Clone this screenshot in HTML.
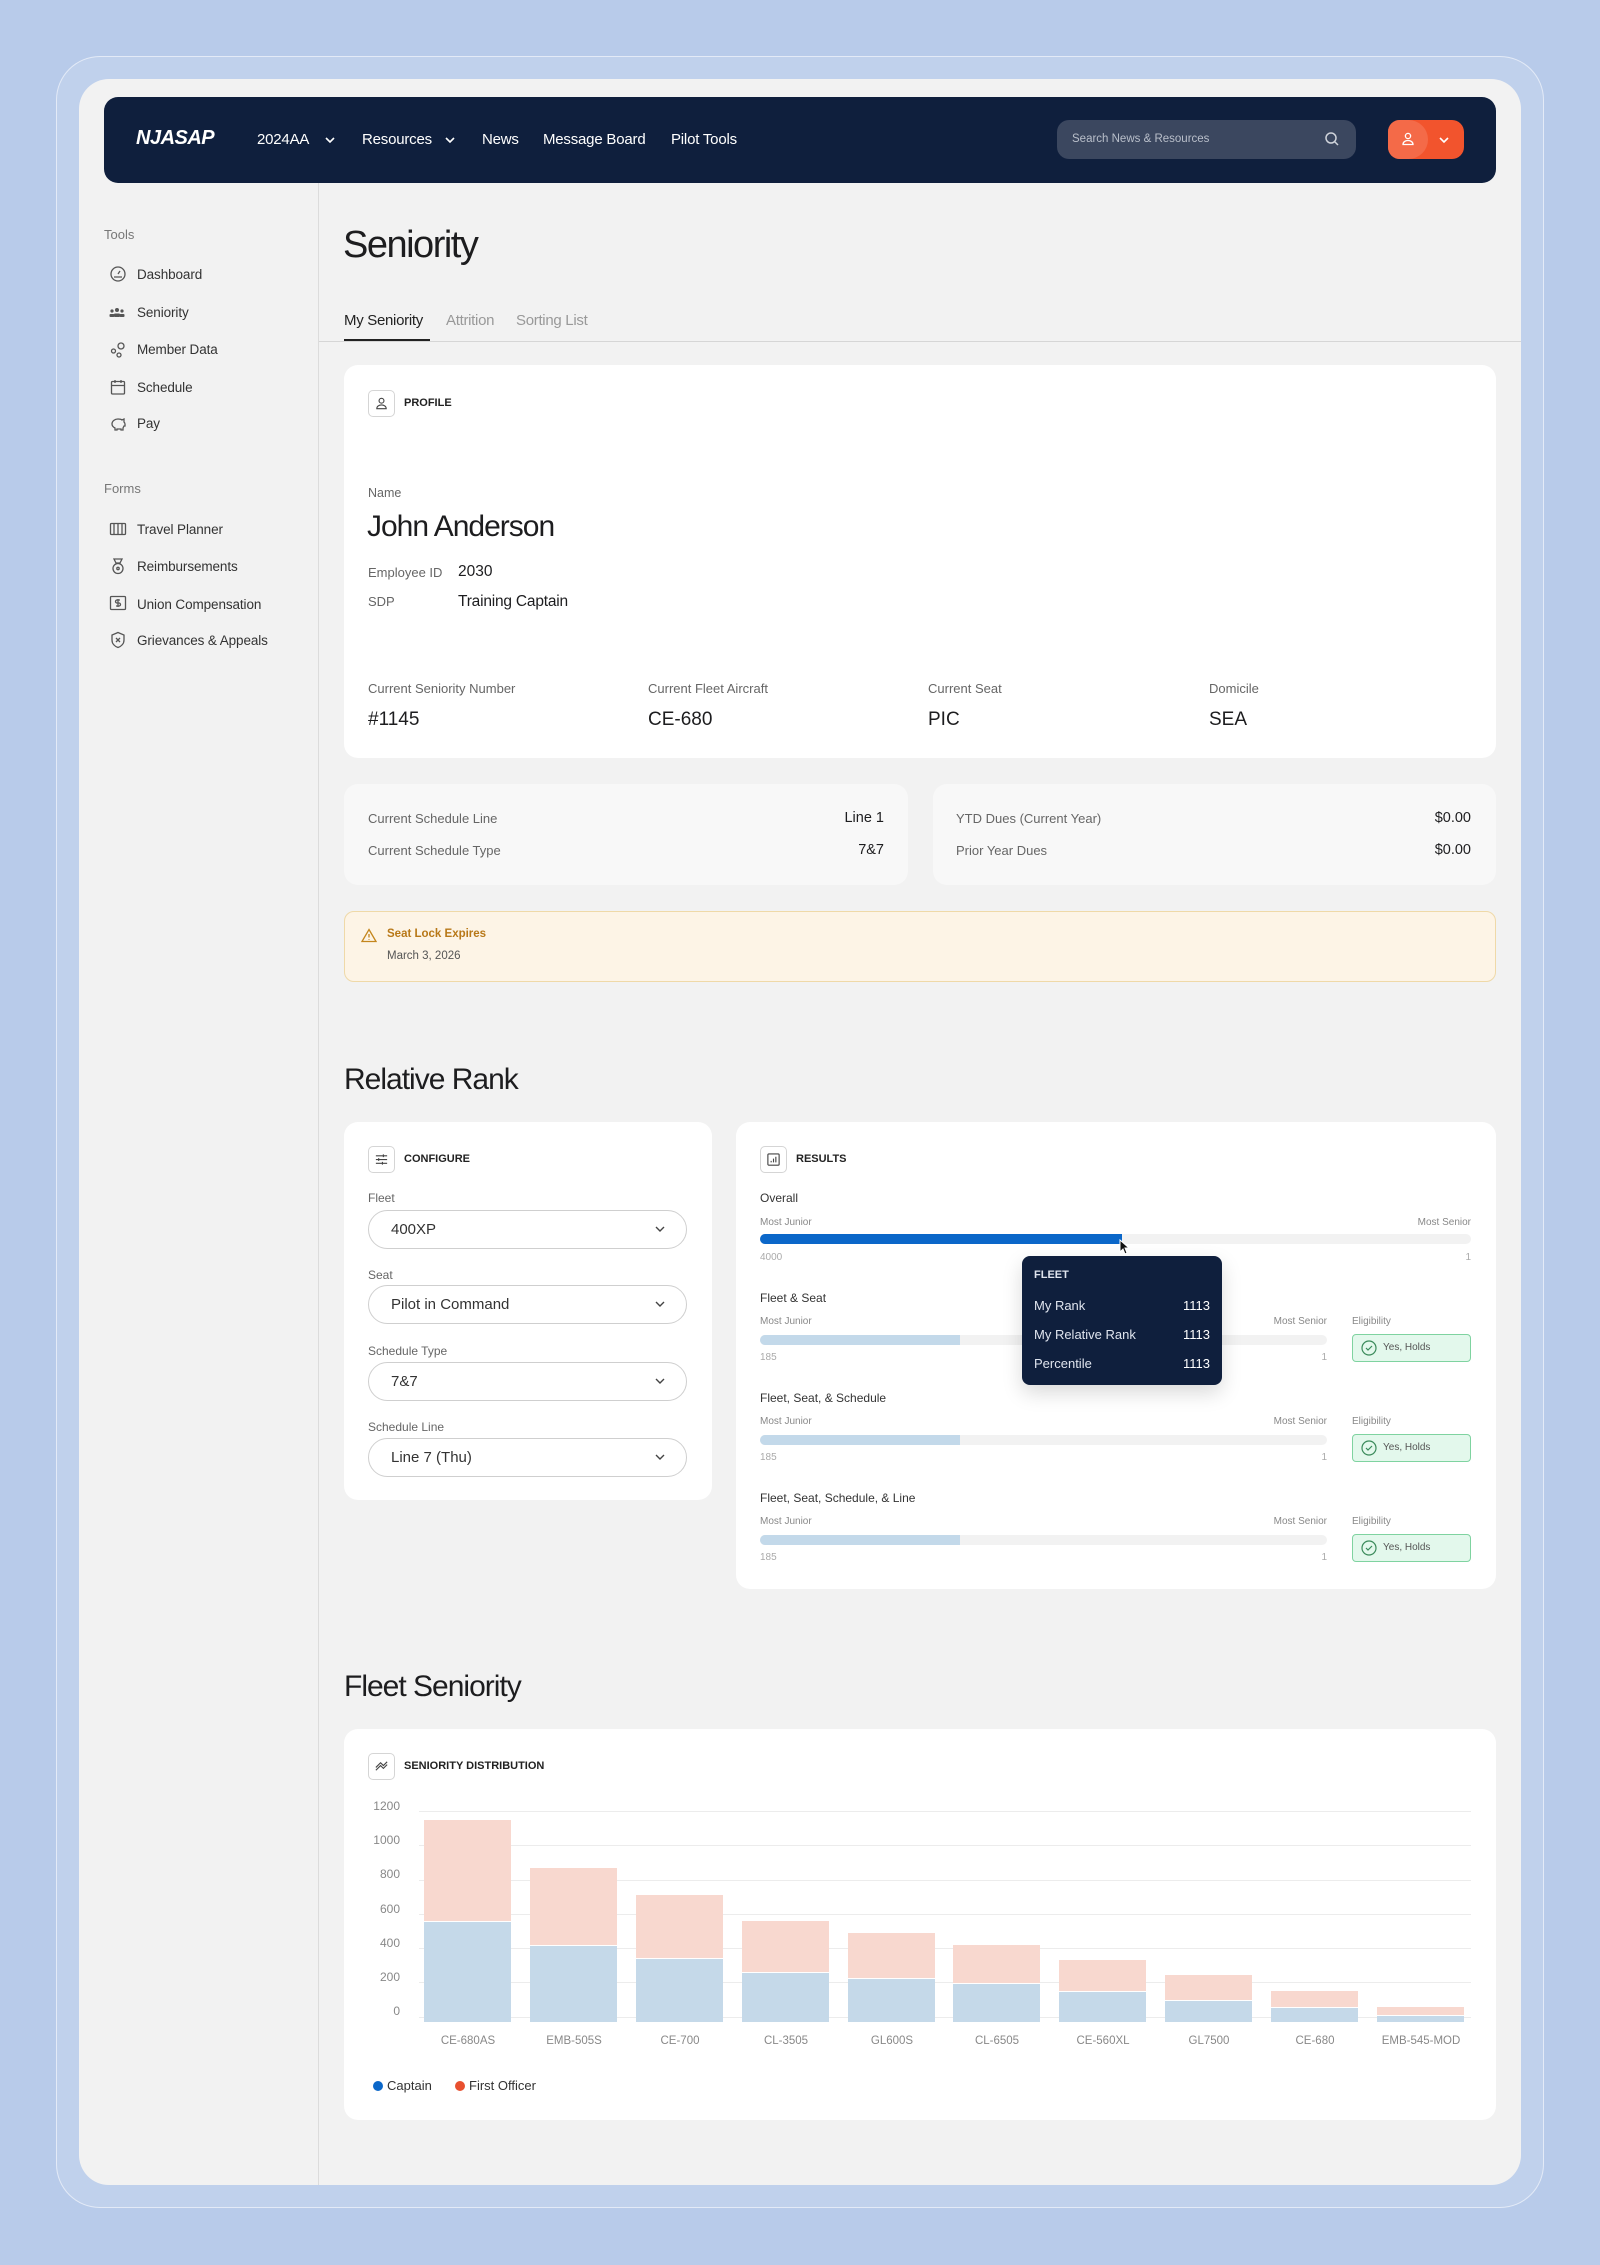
<!DOCTYPE html>
<html><head><meta charset="utf-8"><style>
*{box-sizing:border-box;margin:0;padding:0}
body{width:1600px;height:2265px;background:#b8cbea;font-family:"Liberation Sans",sans-serif;color:#1d1d1f;position:relative;overflow:hidden}
.a{position:absolute}
.frame{left:56px;top:56px;width:1488px;height:2152px;border-radius:44px;background:rgba(255,255,255,.12);border:1.5px solid rgba(255,255,255,.55)}
.card0{left:79px;top:79px;width:1442px;height:2106px;border-radius:30px;background:#f2f2f2}
.nav{left:104px;top:97px;width:1392px;height:86px;border-radius:14px;background:#0f1f3d}
.nv{color:#fff;font-size:15px;top:131px;letter-spacing:-.2px}
.side{left:318px;top:183px;width:1px;height:2002px;background:#dcdcdc}
.sl{font-size:13px;color:#777}
.si{font-size:13.5px;color:#333;letter-spacing:-.1px}
.ic{width:18px;height:18px}
.wc{background:#fff;border-radius:14px}
.lab{font-size:12px;color:#666}
.ib{width:27px;height:27px;border:1px solid #d5d5d5;border-radius:5px;background:#fff}
.ht{font-size:11px;font-weight:bold;color:#222}
.sel{border:1px solid #cfcfcf;border-radius:20px;height:39px;width:319px;background:#fff;font-size:15px;color:#333;padding:0 0 0 22px;line-height:37px}
.sel svg{position:absolute;right:20px;top:14px}
.small{font-size:10px;color:#888}
.bar{height:10px;border-radius:5px;background:#f2f2f2}
.badge{width:119px;height:28px;border:1px solid #7fd3a0;background:#e3f8ec;border-radius:4px;font-size:10px;color:#555;padding-left:30px;line-height:26px}
.badge svg{position:absolute;left:8px;top:5px}
.h2{font-size:30px;color:#1d1d1f;letter-spacing:-1px}
.yl{font-size:12px;color:#888;width:40px;text-align:right;left:360px}
.gl{left:419px;width:1052px;height:1px;background:#ececec}
.xl{font-size:11.5px;color:#888;text-align:center;width:110px}
</style></head><body>
<div class="a frame"></div>
<div class="a card0"></div>
<div class="a nav"></div>
<div class="a" style="left:136px;top:127px;color:#fff;font-weight:bold;font-style:italic;font-size:20px;letter-spacing:-.5px">NJASAP</div>
<div class="a nv" style="left:257px;top:131px">2024AA</div>
<svg class="a" style="left:324px;top:136px" width="12" height="8" viewBox="0 0 12 8"><path d="M2 2l4 4 4-4" stroke="#fff" stroke-width="1.6" fill="none"/></svg>
<div class="a nv" style="left:362px;top:131px">Resources</div>
<svg class="a" style="left:444px;top:136px" width="12" height="8" viewBox="0 0 12 8"><path d="M2 2l4 4 4-4" stroke="#fff" stroke-width="1.6" fill="none"/></svg>
<div class="a nv" style="left:482px;top:131px">News</div>
<div class="a nv" style="left:543px;top:131px">Message Board</div>
<div class="a nv" style="left:671px;top:131px">Pilot Tools</div>
<div class="a" style="left:1057px;top:120px;width:299px;height:39px;border-radius:12px;background:#3b475f"></div>
<div class="a" style="left:1072px;top:133px;font-size:11.5px;color:#b9bfca">Search News &amp; Resources</div>
<svg class="a" style="left:1324px;top:131px" width="16" height="16" viewBox="0 0 16 16"><circle cx="7" cy="7" r="5" stroke="#cfd3da" stroke-width="1.5" fill="none"/><path d="M11 11l3 3" stroke="#cfd3da" stroke-width="1.5"/></svg>
<div class="a" style="left:1388px;top:120px;width:76px;height:39px;border-radius:12px;background:#f2542d"></div>
<div class="a" style="left:1388px;top:120px;width:40px;height:39px;border-radius:12px 20px 20px 12px;background:#f46a48"></div>
<svg class="a" style="left:1400px;top:131px" width="16" height="16" viewBox="0 0 16 16"><circle cx="8" cy="5" r="2.6" stroke="#fff" stroke-width="1.3" fill="none"/><path d="M3 13.5c0-2.5 2.2-4 5-4s5 1.5 5 4z" stroke="#fff" stroke-width="1.3" fill="none"/></svg>
<svg class="a" style="left:1438px;top:136px" width="12" height="8" viewBox="0 0 12 8"><path d="M2 2l4 4 4-4" stroke="#fff" stroke-width="1.6" fill="none"/></svg>

<div class="a side"></div>
<div class="a sl" style="left:104px;top:227px">Tools</div>
<svg class="a ic" style="left:109px;top:265px" viewBox="0 0 18 18" fill="none" stroke="#555" stroke-width="1.3"><circle cx="9" cy="9" r="7"/><path d="M9 9l2-3M5 12h8"/></svg>
<div class="a si" style="left:137px;top:267px">Dashboard</div>
<svg class="a ic" style="left:108px;top:304px" viewBox="0 0 18 18" fill="#555"><circle cx="4" cy="7" r="1.6"/><circle cx="9" cy="6" r="2"/><circle cx="14" cy="7" r="1.6"/><rect x="1.5" y="10" width="5" height="3" rx="1"/><rect x="6" y="9.5" width="6" height="3.5" rx="1"/><rect x="11.5" y="10" width="5" height="3" rx="1"/></svg>
<div class="a si" style="left:137px;top:305px">Seniority</div>
<svg class="a ic" style="left:109px;top:341px" viewBox="0 0 18 18" fill="none" stroke="#555" stroke-width="1.3"><circle cx="12" cy="5" r="3"/><circle cx="4.5" cy="10" r="2"/><circle cx="10" cy="14" r="2"/></svg>
<div class="a si" style="left:137px;top:342px">Member Data</div>
<svg class="a ic" style="left:109px;top:378px" viewBox="0 0 18 18" fill="none" stroke="#555" stroke-width="1.3"><rect x="2.5" y="3.5" width="13" height="12.5" rx="1"/><path d="M2.5 7.5h13M6 2v3M12 2v3"/></svg>
<div class="a si" style="left:137px;top:380px">Schedule</div>
<svg class="a ic" style="left:109px;top:415px" viewBox="0 0 18 18" fill="none" stroke="#555" stroke-width="1.3"><path d="M3 9c0-3 3-5 6-5 2 0 3 0 4 1l2-1v3c1 1 1 2 1 2v2h-1l-1 2v2h-2v-1h-4v1H6v-2C4 12 3 11 3 9z"/></svg>
<div class="a si" style="left:137px;top:416px">Pay</div>

<div class="a sl" style="left:104px;top:481px">Forms</div>
<svg class="a ic" style="left:109px;top:520px" viewBox="0 0 18 18" fill="none" stroke="#555" stroke-width="1.3"><rect x="1.5" y="3.5" width="15" height="11" rx="1"/><path d="M5 3.5v11M9 3.5v11M13 3.5v11"/></svg>
<div class="a si" style="left:137px;top:522px">Travel Planner</div>
<svg class="a ic" style="left:109px;top:557px" viewBox="0 0 18 18" fill="none" stroke="#555" stroke-width="1.3"><path d="M5 2h8l-2 4h-4z"/><circle cx="9" cy="11.5" r="5"/><circle cx="9" cy="11.5" r="1.2"/></svg>
<div class="a si" style="left:137px;top:559px">Reimbursements</div>
<svg class="a ic" style="left:109px;top:594px" viewBox="0 0 18 18" fill="none" stroke="#555" stroke-width="1.3"><rect x="1.5" y="2.5" width="15" height="13" rx="1"/><path d="M11 6H8a1.5 1.5 0 000 3h2a1.5 1.5 0 010 3H7M9 5v8"/></svg>
<div class="a si" style="left:137px;top:597px">Union Compensation</div>
<svg class="a ic" style="left:109px;top:631px" viewBox="0 0 18 18" fill="none" stroke="#555" stroke-width="1.3"><path d="M9 1.5l6 2.5v5c0 4-3 6.5-6 7.5-3-1-6-3.5-6-7.5V4z"/><path d="M7 7l4 4M11 7l-4 4"/></svg>
<div class="a si" style="left:137px;top:633px">Grievances &amp; Appeals</div>

<div class="a" style="left:343px;top:224px;font-size:38px;letter-spacing:-1.5px;color:#1d1d1f">Seniority</div>
<div class="a" style="left:344px;top:312px;font-size:15px;color:#222;letter-spacing:-.3px">My Seniority</div>
<div class="a" style="left:446px;top:312px;font-size:15px;color:#999;letter-spacing:-.3px">Attrition</div>
<div class="a" style="left:516px;top:312px;font-size:15px;color:#999;letter-spacing:-.3px">Sorting List</div>
<div class="a" style="left:319px;top:341px;width:1202px;height:1px;background:#d6d6d6"></div>
<div class="a" style="left:344px;top:339px;width:86px;height:2px;background:#222"></div>

<!-- profile -->
<div class="a wc" style="left:344px;top:365px;width:1152px;height:393px"></div>
<div class="a ib" style="left:368px;top:390px"></div>
<svg class="a" style="left:374px;top:396px" width="15" height="15" viewBox="0 0 16 16" fill="none" stroke="#444" stroke-width="1.2"><circle cx="8" cy="5" r="2.6"/><path d="M3 13.5c0-2.5 2.2-4 5-4s5 1.5 5 4z"/></svg>
<div class="a ht" style="left:404px;top:397px">PROFILE</div>
<div class="a lab" style="left:368px;top:486px;font-size:12.5px">Name</div>
<div class="a" style="left:367px;top:510px;font-size:30px;letter-spacing:-1px">John Anderson</div>
<div class="a lab" style="left:368px;top:565px;font-size:13px">Employee ID</div>
<div class="a" style="left:458px;top:563px;font-size:15.5px">2030</div>
<div class="a lab" style="left:368px;top:594px;font-size:13px">SDP</div>
<div class="a" style="left:458px;top:593px;font-size:15.5px;letter-spacing:-.2px">Training Captain</div>
<div class="a lab" style="left:368px;top:681px;font-size:13px">Current Seniority Number</div>
<div class="a" style="left:368px;top:709px;font-size:19px">#1145</div>
<div class="a lab" style="left:648px;top:681px;font-size:13px">Current Fleet Aircraft</div>
<div class="a" style="left:648px;top:709px;font-size:19px">CE-680</div>
<div class="a lab" style="left:928px;top:681px;font-size:13px">Current Seat</div>
<div class="a" style="left:928px;top:709px;font-size:19px">PIC</div>
<div class="a lab" style="left:1209px;top:681px;font-size:13px">Domicile</div>
<div class="a" style="left:1209px;top:709px;font-size:19px">SEA</div>

<div class="a" style="left:344px;top:784px;width:564px;height:101px;border-radius:14px;background:#f8f8f8"></div>
<div class="a lab" style="left:368px;top:811px;font-size:13px">Current Schedule Line</div>
<div class="a" style="left:808px;top:810px;width:76px;text-align:right;font-size:14.5px">Line 1</div>
<div class="a lab" style="left:368px;top:843px;font-size:13px">Current Schedule Type</div>
<div class="a" style="left:808px;top:842px;width:76px;text-align:right;font-size:14.5px">7&amp;7</div>
<div class="a" style="left:933px;top:784px;width:563px;height:101px;border-radius:14px;background:#f8f8f8"></div>
<div class="a lab" style="left:956px;top:811px;font-size:13px">YTD Dues (Current Year)</div>
<div class="a" style="left:1371px;top:810px;width:100px;text-align:right;font-size:14.5px">$0.00</div>
<div class="a lab" style="left:956px;top:843px;font-size:13px">Prior Year Dues</div>
<div class="a" style="left:1371px;top:842px;width:100px;text-align:right;font-size:14.5px">$0.00</div>

<div class="a" style="left:344px;top:911px;width:1152px;height:71px;border-radius:10px;background:#fdf4e6;border:1px solid #efd9a8"></div>
<svg class="a" style="left:361px;top:928px" width="16" height="15" viewBox="0 0 16 15" fill="none" stroke="#c4861d" stroke-width="1.3"><path d="M8 1.5L15 13.5H1z"/><path d="M8 6v3.5M8 11v.8"/></svg>
<div class="a" style="left:387px;top:928px;font-size:11.5px;font-weight:bold;color:#b87818">Seat Lock Expires</div>
<div class="a" style="left:387px;top:950px;font-size:11.5px;color:#555">March 3, 2026</div>

<div class="a h2" style="left:344px;top:1063px">Relative Rank</div>

<!-- configure -->
<div class="a wc" style="left:344px;top:1122px;width:368px;height:378px"></div>
<div class="a ib" style="left:368px;top:1146px"></div>
<svg class="a" style="left:374px;top:1152px" width="15" height="15" viewBox="0 0 16 16" fill="none" stroke="#444" stroke-width="1.2"><path d="M2 4h12M2 8h12M2 12h12"/><path d="M10 2.5v3M5 6.5v3M9 10.5v3"/></svg>
<div class="a ht" style="left:404px;top:1153px">CONFIGURE</div>
<div class="a lab" style="left:368px;top:1191px;font-size:12px">Fleet</div>
<div class="a sel" style="left:368px;top:1210px">400XP<svg width="12" height="8" viewBox="0 0 12 8"><path d="M2 2l4 4 4-4" stroke="#444" stroke-width="1.4" fill="none"/></svg></div>
<div class="a lab" style="left:368px;top:1268px;font-size:12px">Seat</div>
<div class="a sel" style="left:368px;top:1285px">Pilot in Command<svg width="12" height="8" viewBox="0 0 12 8"><path d="M2 2l4 4 4-4" stroke="#444" stroke-width="1.4" fill="none"/></svg></div>
<div class="a lab" style="left:368px;top:1344px;font-size:12px">Schedule Type</div>
<div class="a sel" style="left:368px;top:1362px">7&amp;7<svg width="12" height="8" viewBox="0 0 12 8"><path d="M2 2l4 4 4-4" stroke="#444" stroke-width="1.4" fill="none"/></svg></div>
<div class="a lab" style="left:368px;top:1420px;font-size:12px">Schedule Line</div>
<div class="a sel" style="left:368px;top:1438px">Line 7 (Thu)<svg width="12" height="8" viewBox="0 0 12 8"><path d="M2 2l4 4 4-4" stroke="#444" stroke-width="1.4" fill="none"/></svg></div>

<!-- results -->
<div class="a wc" style="left:736px;top:1122px;width:760px;height:467px"></div>
<div class="a ib" style="left:760px;top:1146px"></div>
<svg class="a" style="left:766px;top:1152px" width="15" height="15" viewBox="0 0 16 16" fill="none" stroke="#444" stroke-width="1.2"><rect x="2" y="2" width="12" height="12" rx="1"/><path d="M5.5 11v-1.5M8 11V7M10.5 11V5"/></svg>
<div class="a ht" style="left:796px;top:1153px">RESULTS</div>
<div class="a" style="left:760px;top:1191px;font-size:12px;color:#333">Overall</div>
<div class="a small" style="left:760px;top:1217px">Most Junior</div>
<div class="a small" style="left:1371px;top:1217px;width:100px;text-align:right">Most Senior</div>
<div class="a bar" style="left:760px;top:1234px;width:711px"></div>
<div class="a" style="left:760px;top:1234px;width:362px;height:10px;border-radius:5px 0 0 5px;background:#0b67c9"></div>
<div class="a small" style="left:760px;top:1252px;color:#aaa">4000</div>
<div class="a small" style="left:1371px;top:1252px;width:100px;text-align:right;color:#aaa">1</div>

<div class="a" style="left:760px;top:1291px;font-size:12px;color:#333">Fleet &amp; Seat</div>
<div class="a small" style="left:760px;top:1316px">Most Junior</div>
<div class="a small" style="left:1227px;top:1316px;width:100px;text-align:right">Most Senior</div>
<div class="a bar" style="left:760px;top:1335px;width:567px"></div>
<div class="a" style="left:760px;top:1335px;width:200px;height:10px;border-radius:5px 0 0 5px;background:#c3d9ea"></div>
<div class="a small" style="left:760px;top:1352px;color:#aaa">185</div>
<div class="a small" style="left:1227px;top:1352px;width:100px;text-align:right;color:#aaa">1</div>
<div class="a small" style="left:1352px;top:1316px">Eligibility</div>
<div class="a badge" style="left:1352px;top:1334px"><svg width="16" height="16" viewBox="0 0 16 16" fill="none" stroke="#3a8a5a" stroke-width="1.2"><circle cx="8" cy="8" r="7"/><path d="M5 8l2 2 4-4"/></svg>Yes, Holds</div>

<div class="a" style="left:760px;top:1391px;font-size:12px;color:#333">Fleet, Seat, &amp; Schedule</div>
<div class="a small" style="left:760px;top:1416px">Most Junior</div>
<div class="a small" style="left:1227px;top:1416px;width:100px;text-align:right">Most Senior</div>
<div class="a bar" style="left:760px;top:1435px;width:567px"></div>
<div class="a" style="left:760px;top:1435px;width:200px;height:10px;border-radius:5px 0 0 5px;background:#c3d9ea"></div>
<div class="a small" style="left:760px;top:1452px;color:#aaa">185</div>
<div class="a small" style="left:1227px;top:1452px;width:100px;text-align:right;color:#aaa">1</div>
<div class="a small" style="left:1352px;top:1416px">Eligibility</div>
<div class="a badge" style="left:1352px;top:1434px"><svg width="16" height="16" viewBox="0 0 16 16" fill="none" stroke="#3a8a5a" stroke-width="1.2"><circle cx="8" cy="8" r="7"/><path d="M5 8l2 2 4-4"/></svg>Yes, Holds</div>

<div class="a" style="left:760px;top:1491px;font-size:12px;color:#333">Fleet, Seat, Schedule, &amp; Line</div>
<div class="a small" style="left:760px;top:1516px">Most Junior</div>
<div class="a small" style="left:1227px;top:1516px;width:100px;text-align:right">Most Senior</div>
<div class="a bar" style="left:760px;top:1535px;width:567px"></div>
<div class="a" style="left:760px;top:1535px;width:200px;height:10px;border-radius:5px 0 0 5px;background:#c3d9ea"></div>
<div class="a small" style="left:760px;top:1552px;color:#aaa">185</div>
<div class="a small" style="left:1227px;top:1552px;width:100px;text-align:right;color:#aaa">1</div>
<div class="a small" style="left:1352px;top:1516px">Eligibility</div>
<div class="a badge" style="left:1352px;top:1534px"><svg width="16" height="16" viewBox="0 0 16 16" fill="none" stroke="#3a8a5a" stroke-width="1.2"><circle cx="8" cy="8" r="7"/><path d="M5 8l2 2 4-4"/></svg>Yes, Holds</div>

<div class="a" style="left:1022px;top:1256px;width:200px;height:129px;border-radius:8px;background:#0f1f3d;box-shadow:0 8px 20px rgba(0,0,0,.15)"></div>
<div class="a" style="left:1034px;top:1269px;font-size:11px;font-weight:bold;color:#dfe4ee">FLEET</div>
<div class="a" style="left:1034px;top:1298px;font-size:13px;color:#dfe4ee">My Rank</div>
<div class="a" style="left:1160px;top:1298px;width:50px;text-align:right;font-size:13px;color:#fff">1113</div>
<div class="a" style="left:1034px;top:1327px;font-size:13px;color:#dfe4ee">My Relative Rank</div>
<div class="a" style="left:1160px;top:1327px;width:50px;text-align:right;font-size:13px;color:#fff">1113</div>
<div class="a" style="left:1034px;top:1356px;font-size:13px;color:#dfe4ee">Percentile</div>
<div class="a" style="left:1160px;top:1356px;width:50px;text-align:right;font-size:13px;color:#fff">1113</div>
<svg class="a" style="left:1119px;top:1239px" width="12" height="16" viewBox="0 0 12 16"><path d="M1 1v12l3-3 2 5 2-1-2-5h4z" fill="#111" stroke="#fff" stroke-width="1"/></svg>

<div class="a h2" style="left:344px;top:1670px">Fleet Seniority</div>
<div class="a wc" style="left:344px;top:1729px;width:1152px;height:391px"></div>
<div class="a ib" style="left:368px;top:1753px"></div>
<svg class="a" style="left:374px;top:1759px" width="15" height="15" viewBox="0 0 16 16" fill="none" stroke="#444" stroke-width="1.2"><path d="M2 9l5-5 3 3 4-4M2 12l5-5 3 3 4-4"/></svg>
<div class="a ht" style="left:404px;top:1760px">SENIORITY DISTRIBUTION</div>

<div class="a yl" style="top:1799px">1200</div><div class="a gl" style="top:1811px"></div>
<div class="a yl" style="top:1833px">1000</div><div class="a gl" style="top:1845px"></div>
<div class="a yl" style="top:1867px">800</div><div class="a gl" style="top:1880px"></div>
<div class="a yl" style="top:1902px">600</div><div class="a gl" style="top:1914px"></div>
<div class="a yl" style="top:1936px">400</div><div class="a gl" style="top:1948px"></div>
<div class="a yl" style="top:1970px">200</div><div class="a gl" style="top:1982px"></div>
<div class="a yl" style="top:2004px">0</div><div class="a gl" style="top:2017px"></div>

<svg class="a" style="left:0;top:0" width="1600" height="2265">
<g>
<rect x="424" y="1820" width="87" height="101" fill="#f8d8cf"/><rect x="424" y="1922" width="87" height="100" fill="#c5d9e9"/>
<rect x="530" y="1868" width="87" height="77" fill="#f8d8cf"/><rect x="530" y="1946" width="87" height="76" fill="#c5d9e9"/>
<rect x="636" y="1895" width="87" height="63" fill="#f8d8cf"/><rect x="636" y="1959" width="87" height="63" fill="#c5d9e9"/>
<rect x="742" y="1921" width="87" height="51" fill="#f8d8cf"/><rect x="742" y="1973" width="87" height="49" fill="#c5d9e9"/>
<rect x="848" y="1933" width="87" height="45" fill="#f8d8cf"/><rect x="848" y="1979" width="87" height="43" fill="#c5d9e9"/>
<rect x="953" y="1945" width="87" height="38" fill="#f8d8cf"/><rect x="953" y="1984" width="87" height="38" fill="#c5d9e9"/>
<rect x="1059" y="1960" width="87" height="31" fill="#f8d8cf"/><rect x="1059" y="1992" width="87" height="30" fill="#c5d9e9"/>
<rect x="1165" y="1975" width="87" height="25" fill="#f8d8cf"/><rect x="1165" y="2001" width="87" height="21" fill="#c5d9e9"/>
<rect x="1271" y="1991" width="87" height="16" fill="#f8d8cf"/><rect x="1271" y="2008" width="87" height="14" fill="#c5d9e9"/>
<rect x="1377" y="2007" width="87" height="8" fill="#f8d8cf"/><rect x="1377" y="2016" width="87" height="6" fill="#c5d9e9"/>
</g></svg>
<div class="a xl" style="left:413px;top:2035px">CE-680AS</div>
<div class="a xl" style="left:519px;top:2035px">EMB-505S</div>
<div class="a xl" style="left:625px;top:2035px">CE-700</div>
<div class="a xl" style="left:731px;top:2035px">CL-3505</div>
<div class="a xl" style="left:837px;top:2035px">GL600S</div>
<div class="a xl" style="left:942px;top:2035px">CL-6505</div>
<div class="a xl" style="left:1048px;top:2035px">CE-560XL</div>
<div class="a xl" style="left:1154px;top:2035px">GL7500</div>
<div class="a xl" style="left:1260px;top:2035px">CE-680</div>
<div class="a xl" style="left:1366px;top:2035px">EMB-545-MOD</div>

<div class="a" style="left:373px;top:2081px;width:10px;height:10px;border-radius:50%;background:#0b67c9"></div>
<div class="a" style="left:387px;top:2078px;font-size:13px;color:#333">Captain</div>
<div class="a" style="left:455px;top:2081px;width:10px;height:10px;border-radius:50%;background:#e8502f"></div>
<div class="a" style="left:469px;top:2078px;font-size:13px;color:#333">First Officer</div>
</body></html>
